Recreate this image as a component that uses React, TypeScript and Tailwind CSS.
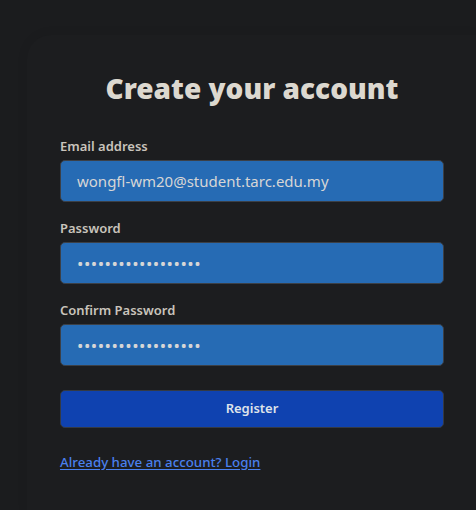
import { useState } from 'react';

const Field = ({
  label,
  type,
  value,
  onChange,
}: {
  label: string;
  type: string;
  value: string;
  onChange: (v: string) => void;
}) => (
  <div className="flex flex-col">
    <label className="text-[13px] leading-[18px] font-semibold text-[#c9c4bc] mb-[5px]">{label}</label>
    <input
      type={type}
      value={value}
      onChange={(e) => onChange(e.target.value)}
      className={`h-[42px] w-full rounded-[5px] border border-[#3b4047] bg-[#266bb4] px-[16px] text-[#d6d6d6] focus:outline-none ${
        type === 'password' ? 'text-[17px] tracking-[0.5px]' : 'text-[15px]'
      }`}
    />
  </div>
);

export default function App() {
  const [email, setEmail] = useState('wongfl-wm20@student.tarc.edu.my');
  const [password, setPassword] = useState('wongflwm20password');
  const [confirm, setConfirm] = useState('wongflwm20password');

  return (
    <div className="min-h-[510px] w-full bg-[#1b1c1e] pt-[35px] pl-[27px] font-['Noto_Sans','Open_Sans',sans-serif]">
      <div className="rounded-tl-[24px] bg-[#1c1d1f] shadow-[0_0_12px_rgba(0,0,0,0.07)] pl-[33px] pr-[32px] pt-[35px] pb-[40px]">
        <h1 className="text-center text-[28px] leading-[36px] font-black text-[#dcd8cf]">
          Create your account
        </h1>

        <form className="mt-[31px] flex flex-col" onSubmit={(e) => e.preventDefault()}>
          <div className="flex flex-col gap-[17px]">
            <Field label="Email address" type="email" value={email} onChange={setEmail} />
            <Field label="Password" type="password" value={password} onChange={setPassword} />
            <Field label="Confirm Password" type="password" value={confirm} onChange={setConfirm} />
          </div>

          <button
            type="submit"
            className="mt-[24px] h-[38px] w-full rounded-[5px] border border-[#343a44] bg-[#0f42b0] text-[13px] font-semibold text-[#dfe3ea]"
          >
            Register
          </button>

          <a href="#" className="mt-[25px] self-start text-[13.3px] leading-[18px] font-medium text-[#4a80ee] underline underline-offset-2">
            Already have an account? Login
          </a>
        </form>
      </div>
    </div>
  );
}
